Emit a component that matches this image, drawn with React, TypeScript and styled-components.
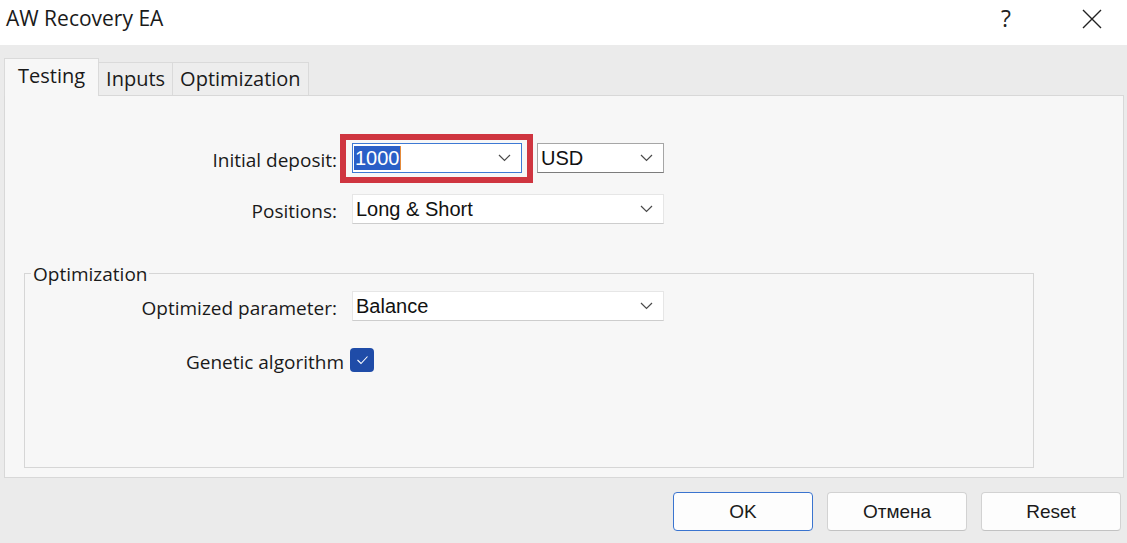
import React from "react";
import styled, { createGlobalStyle, css } from "styled-components";

const GlobalStyle = createGlobalStyle`
  html, body { margin: 0; padding: 0; background: #ebebeb; }
  body { font-family: "Open Sans", "Noto Sans", sans-serif; color: #1a1a1a; }
  * { box-sizing: border-box; }
`;

const Window = styled.div`
  width: 1127px;
  height: 543px;
  display: flex;
  flex-direction: column;
  background: #ebebeb;
  overflow: hidden;
`;

const TitleBar = styled.header`
  height: 45px;
  flex: none;
  background: #ffffff;
  display: flex;
  align-items: center;
  padding: 0 12px 8px 6px;
`;

const Title = styled.h1`
  margin: 0;
  flex: 1;
  font: 400 21px/1 "Open Sans", sans-serif;
  color: #1a1a1a;
`;

const TitleButtons = styled.div`
  display: flex;
  gap: 40px;
`;

const TitleButton = styled.span`
  width: 46px;
  height: 24px;
  display: flex;
  align-items: center;
  justify-content: center;
  font: 400 23px/1 "Open Sans", sans-serif;
  color: #222;
`;

const Body = styled.main`
  flex: 1;
  display: flex;
  flex-direction: column;
  padding: 13px 3px 0 4px;
`;

const TabStrip = styled.div`
  height: 37px;
  display: flex;
  align-items: flex-end;
`;

const Tab = styled.div<{ $active?: boolean }>`
  height: 33px;
  display: flex;
  align-items: center;
  padding: 0 7px;
  margin-left: -1px;
  background: #ededed;
  border: 1px solid #dadada;
  border-bottom: none;
  font: 400 20px/1 "Open Sans", sans-serif;
  color: #1a1a1a;
  ${(p) =>
    p.$active &&
    css`
      position: relative;
      z-index: 1;
      height: 38px;
      margin-left: 0;
      margin-bottom: -1px;
      padding: 0 13px 4px;
      background: #f7f7f7;
    `}
`;

const Panel = styled.section`
  width: 1120px;
  height: 383px;
  flex: none;
  display: flex;
  flex-direction: column;
  background: #f7f7f7;
  border: 1px solid #d8d8d8;
  padding-top: 47px;
`;

const Row = styled.div<{ $mt?: number }>`
  display: flex;
  align-items: center;
  gap: 15px;
  height: 30px;
  margin-top: ${(p) => p.$mt ?? 0}px;
`;

const Label = styled.label<{ $w: number }>`
  width: ${(p) => p.$w}px;
  flex: none;
  padding-top: 4px;
  text-align: right;
  font: 400 19px/1 "Open Sans", sans-serif;
  color: #1a1a1a;
  white-space: nowrap;
`;

type Tone = "focus" | "classic" | "flat";

const Combo = styled.div<{ $w: number; $tone: Tone; $marked?: boolean }>`
  width: ${(p) => p.$w}px;
  height: 30px;
  flex: none;
  display: flex;
  align-items: center;
  justify-content: space-between;
  padding: 0 10px 0 3px;
  background: #ffffff;
  font: 400 20px/1 "Liberation Sans", Arial, sans-serif;
  color: #111;
  ${(p) =>
    p.$tone === "focus" &&
    css`
      border: 1px solid #3d79d4;
      padding-left: 1px;
    `}
  ${(p) =>
    p.$tone === "classic" &&
    css`
      border: 1px solid #a6a6a6;
      border-bottom-color: #7c7c7c;
    `}
  ${(p) =>
    p.$tone === "flat" &&
    css`
      border: 1px solid #e6e6e6;
      border-bottom-color: #cdcdcd;
    `}
  ${(p) =>
    p.$marked &&
    css`
      position: relative;
      &::after {
        content: "";
        position: absolute;
        top: -10px;
        left: -13px;
        right: -12px;
        bottom: -11px;
        border: 6px solid #cf3540;
        pointer-events: none;
      }
    `}
`;

const Selected = styled.span`
  background: #2a5fc7;
  color: #ffffff;
  line-height: 24px;
  padding: 0 0 0 1px;
  border-right: 1px solid #e48a3a;
`;

const GroupBox = styled.section`
  width: 1010px;
  height: 195px;
  margin: 49px 0 0 19px;
  border: 1px solid #d6d6d6;
  display: flex;
  flex-direction: column;
`;

const Legend = styled.div`
  width: fit-content;
  margin: -12px 0 0 6px;
  padding: 0 2px;
  background: #f7f7f7;
  font: 400 19px/24px "Open Sans", sans-serif;
  color: #1a1a1a;
`;

const CheckRow = styled.div`
  display: flex;
  align-items: center;
  gap: 6px;
  height: 24px;
  margin-top: 27px;
`;

const CheckBox = styled.span`
  width: 24px;
  height: 24px;
  flex: none;
  border-radius: 4px;
  background: #1f4ca8;
  display: flex;
  align-items: center;
  justify-content: center;
`;

const Footer = styled.footer`
  display: flex;
  justify-content: flex-end;
  gap: 14px;
  padding: 14px 3px 0 0;
`;

const Button = styled.button<{ $primary?: boolean }>`
  width: 140px;
  height: 39px;
  background: #fdfdfd;
  border: 1px solid ${(p) => (p.$primary ? "#3a74cf" : "#d2d2d2")};
  border-bottom-color: ${(p) => (p.$primary ? "#3a74cf" : "#c2c2c2")};
  border-radius: 4px;
  font: 400 19px/1 "Liberation Sans", Arial, sans-serif;
  color: #1a1a1a;
  padding: 0;
`;

const Chevron = () => (
  <svg width="13" height="8" viewBox="0 0 13 8" fill="none">
    <polyline points="1,1 6.5,6.5 12,1" stroke="#4a4a4a" strokeWidth="1.2" />
  </svg>
);

const CloseIcon = () => (
  <svg width="20" height="20" viewBox="0 0 20 20" fill="none">
    <path d="M1 1 L19 19 M19 1 L1 19" stroke="#222" strokeWidth="1.4" />
  </svg>
);

const CheckIcon = () => (
  <svg width="13" height="10" viewBox="0 0 13 10" fill="none">
    <polyline points="1.5,5 5,8.5 11.5,1.5" stroke="#ffffff" strokeWidth="1.1" />
  </svg>
);

export default function App() {
  return (
    <>
      <GlobalStyle />
      <Window>
        <TitleBar>
          <Title>AW Recovery EA</Title>
          <TitleButtons>
            <TitleButton>?</TitleButton>
            <TitleButton>
              <CloseIcon />
            </TitleButton>
          </TitleButtons>
        </TitleBar>
        <Body>
          <TabStrip>
            <Tab $active>Testing</Tab>
            <Tab>Inputs</Tab>
            <Tab>Optimization</Tab>
          </TabStrip>
          <Panel>
            <Row>
              <Label $w={332}>Initial deposit:</Label>
              <Combo $w={170} $tone="focus" $marked>
                <Selected>1000</Selected>
                <Chevron />
              </Combo>
              <Combo $w={127} $tone="classic">
                <span>USD</span>
                <Chevron />
              </Combo>
            </Row>
            <Row $mt={21}>
              <Label $w={332}>Positions:</Label>
              <Combo $w={312} $tone="flat">
                <span>Long &amp; Short</span>
                <Chevron />
              </Combo>
            </Row>
            <GroupBox>
              <Legend>Optimization</Legend>
              <Row $mt={5}>
                <Label $w={312}>Optimized parameter:</Label>
                <Combo $w={312} $tone="flat">
                  <span>Balance</span>
                  <Chevron />
                </Combo>
              </Row>
              <CheckRow>
                <Label $w={319}>Genetic algorithm</Label>
                <CheckBox>
                  <CheckIcon />
                </CheckBox>
              </CheckRow>
            </GroupBox>
          </Panel>
          <Footer>
            <Button $primary>OK</Button>
            <Button>Отмена</Button>
            <Button>Reset</Button>
          </Footer>
        </Body>
      </Window>
    </>
  );
}
